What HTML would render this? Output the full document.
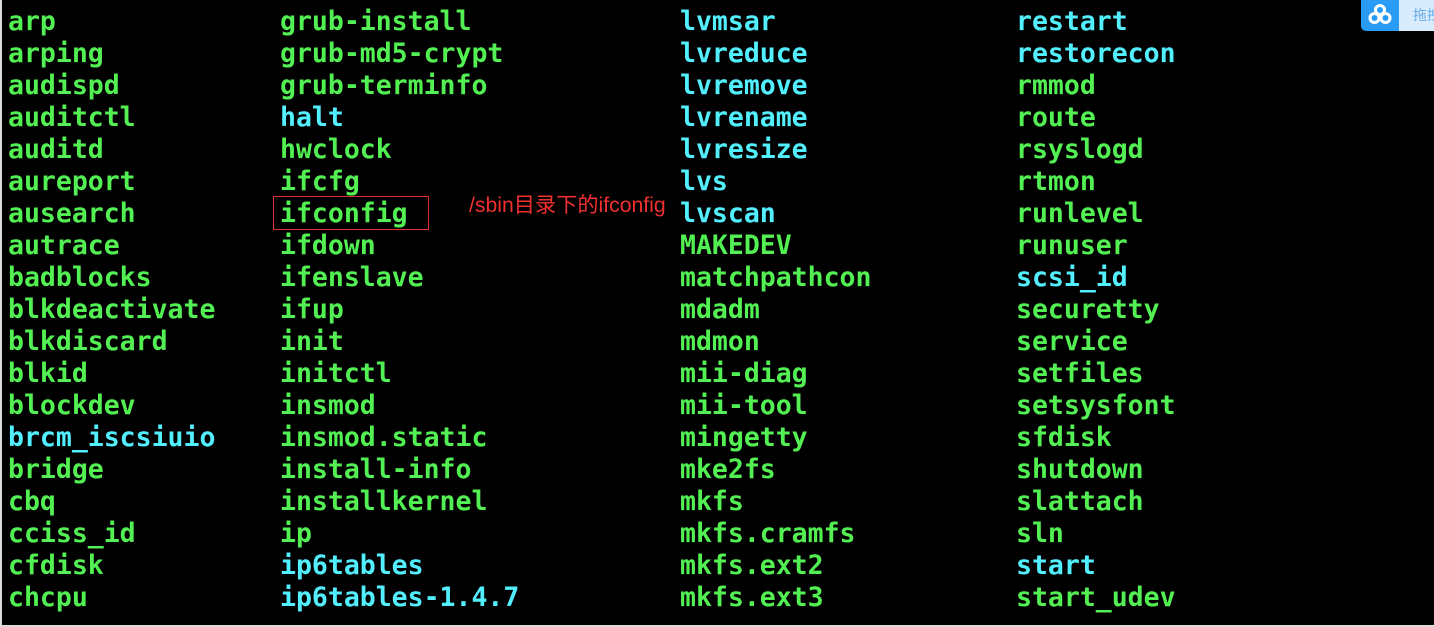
<!DOCTYPE html>
<html><head><meta charset="utf-8"><style>
html,body{margin:0;padding:0;}
body{width:1434px;height:627px;background:#dcdcdc;position:relative;overflow:hidden;}
#t{position:absolute;left:2px;top:0;width:1432px;height:625px;background:#000;}
.c{position:absolute;top:6px;font-family:"DejaVu Sans Mono","Liberation Mono",monospace;font-weight:bold;font-size:26.5px;line-height:32px;color:#52f052;white-space:pre;}
.b{color:#52f0ff;}
#box{position:absolute;left:273px;top:196px;width:154px;height:32px;border:1px solid #e03030;}
#note{position:absolute;left:469px;top:193px;font-family:"Liberation Sans","Noto Sans CJK SC",sans-serif;font-size:21.2px;color:#f03030;line-height:26px;}
#w1{position:absolute;left:1361px;top:0;width:38px;height:31px;background:#2a9cf5;border-radius:0 0 0 5px;}
#w2{position:absolute;left:1399px;top:0;width:35px;height:31px;background:#d8ecfd;font-family:"Noto Sans CJK SC",sans-serif;font-size:14px;color:#6aaee8;line-height:31px;padding-left:14px;box-sizing:border-box;overflow:hidden;white-space:nowrap;}
</style></head><body>
<div id="t"></div>
<div class="c" style="left:8px">arp
arping
audispd
auditctl
auditd
aureport
ausearch
autrace
badblocks
blkdeactivate
blkdiscard
blkid
blockdev
<span class="b">brcm_iscsiuio</span>
bridge
cbq
cciss_id
cfdisk
chcpu</div>
<div class="c" style="left:280px">grub-install
grub-md5-crypt
grub-terminfo
<span class="b">halt</span>
hwclock
ifcfg
ifconfig
ifdown
ifenslave
ifup
init
initctl
insmod
insmod.static
install-info
installkernel
ip
<span class="b">ip6tables
ip6tables-1.4.7</span></div>
<div class="c" style="left:680px"><span class="b">lvmsar
lvreduce
lvremove
lvrename
lvresize
lvs
lvscan</span>
MAKEDEV
matchpathcon
mdadm
mdmon
mii-diag
mii-tool
mingetty
mke2fs
mkfs
mkfs.cramfs
mkfs.ext2
mkfs.ext3</div>
<div class="c" style="left:1016px"><span class="b">restart
restorecon</span>
rmmod
route
rsyslogd
rtmon
runlevel
runuser
<span class="b">scsi_id</span>
securetty
service
setfiles
setsysfont
sfdisk
shutdown
slattach
sln
<span class="b">start</span>
start_udev</div>
<div id="box"></div>
<div id="note">/sbin目录下的ifconfig</div>
<div id="w1"><svg width="38" height="31" viewBox="0 0 38 31"><g fill="none" stroke="#fff" stroke-width="3"><circle cx="19" cy="10" r="4.5"/><circle cx="13.5" cy="18" r="4.5"/><circle cx="24.5" cy="18" r="4.5"/></g></svg></div>
<div id="w2">拖拽</div>
</body></html>
